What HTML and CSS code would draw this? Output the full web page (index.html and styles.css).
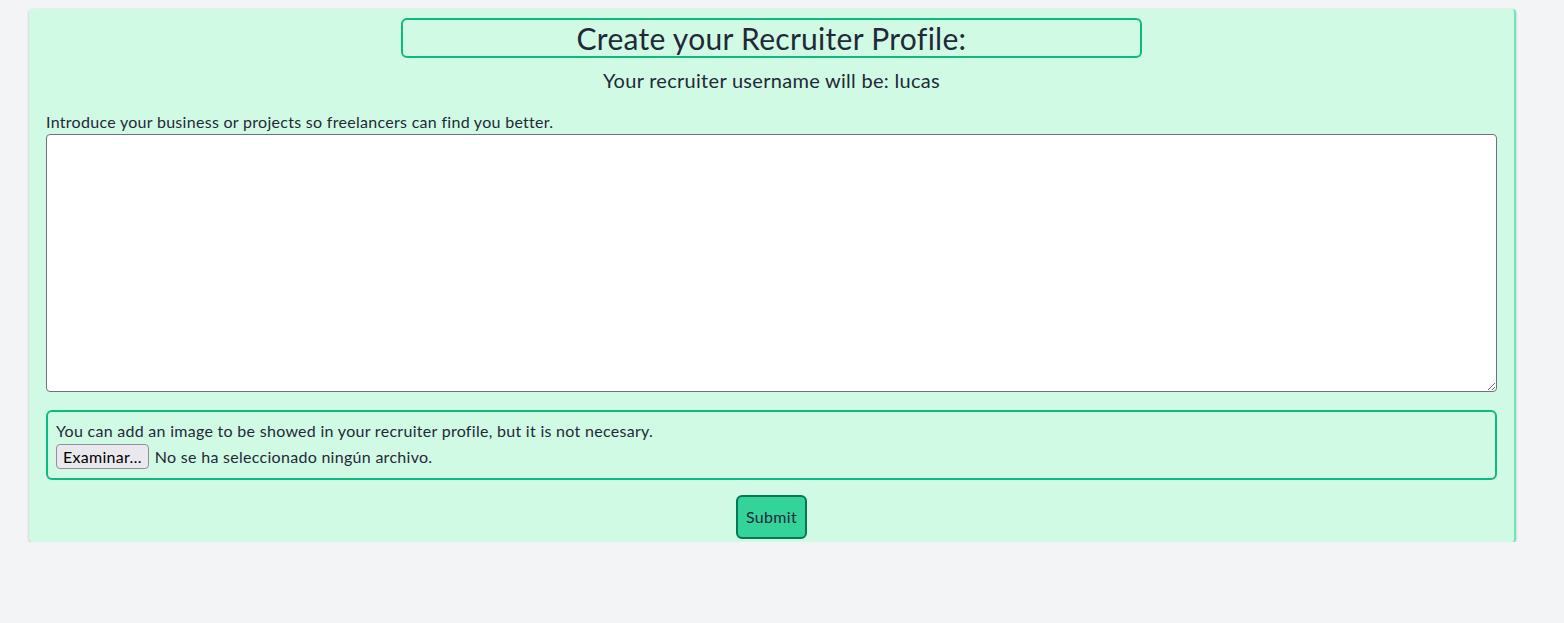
FILE: index.html
```html
<!DOCTYPE html>
<html lang="en">
<head>
<meta charset="utf-8">
<title>Create your Recruiter Profile</title>
<link rel="stylesheet" href="styles.css">
</head>
<body>
<main class="page">
  <form class="card">
    <h1 class="title">Create your Recruiter Profile:</h1>
    <p class="subtitle">Your recruiter username will be: lucas</p>
    <label class="label" for="about">Introduce your business or projects so freelancers can find you better.</label>
    <textarea id="about" class="about"></textarea>
    <div class="image-box">
      <p class="image-text">You can add an image to be showed in your recruiter profile, but it is not necesary.</p>
      <div class="file-row">
        <span class="file-btn">Examinar…</span>
        <span class="file-name">No se ha seleccionado ningún archivo.</span>
      </div>
    </div>
    <div class="actions">
      <button type="button" class="submit">Submit</button>
    </div>
  </form>
</main>
</body>
</html>
```
FILE: styles.css
```css
* { box-sizing: border-box; }
html, body { margin: 0; padding: 0; }
body {
  background: #f3f4f6;
  font-family: Lato, "Noto Sans", sans-serif;
  color: #1f2937;
  font-size: 16px;
  letter-spacing: 0.018em;
}
.page {
  padding: 9px 48px 0 29px;
}
.card {
  background: #d1fae5;
  border-right: 2px solid #6ee7b7;
  border-radius: 4px;
  box-shadow: 0 1px 3px rgba(0,0,0,0.18), 0 1px 2px rgba(0,0,0,0.08);
  padding: 9px 17px 3px 17px;
  display: flex;
  flex-direction: column;
}
.title {
  margin: 0 auto;
  width: 741px;
  border: 2px solid #10b981;
  border-radius: 6px;
  text-align: center;
  font-size: 30px;
  font-weight: 400;
  line-height: 36px;
}
.subtitle {
  margin: 8px 0 0;
  text-align: center;
  font-size: 20px;
  line-height: 28px;
}
.label {
  margin-top: 16px;
  line-height: 24px;
  font-size: 16px;
}
.about {
  display: block;
  width: 100%;
  height: 258px;
  border: 1px solid #6b7280;
  border-radius: 4px;
  background: #fff;
  resize: vertical;
  font-family: inherit;
  font-size: 16px;
}
.image-box {
  margin-top: 18px;
  border: 2px solid #10b981;
  border-radius: 6px;
  padding: 8px 8px 9px 8px;
}
.image-text {
  margin: 0;
  line-height: 22px;
}
.file-row {
  display: flex;
  align-items: center;
  gap: 6px;
  margin-top: 2px;
}
.file-btn {
  background: #e9e9ed;
  border: 1px solid #8f8f9d;
  border-radius: 4px;
  padding: 0 6px;
  line-height: 23px;
  color: #000;
}
.file-name {
  line-height: 24px;
}
.actions {
  display: flex;
  justify-content: center;
  margin-top: 15px;
}
.submit {
  background: #34d399;
  border: 2px solid #047857;
  border-radius: 6px;
  padding: 8px 8px;
  font-family: inherit;
  font-size: 16px;
  letter-spacing: 0.018em;
  line-height: 24px;
  color: #1f2937;
}
```
